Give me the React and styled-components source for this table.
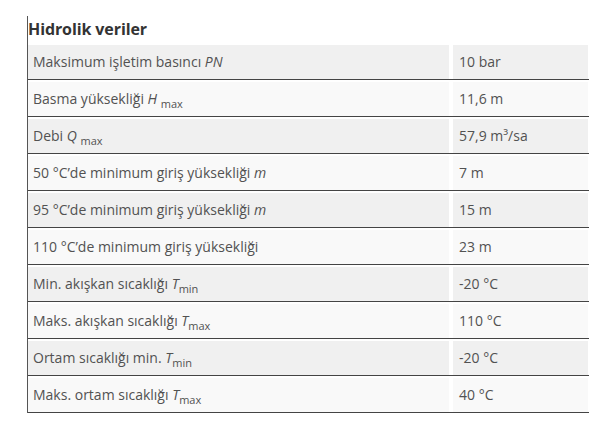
import React from "react";
import styled, { createGlobalStyle } from "styled-components";

const Global = createGlobalStyle`
  html, body { margin: 0; padding: 0; background: #fff; }
  body { font-family: "Open Sans", "Noto Sans", sans-serif; }
`;

const Page = styled.div`
  padding: 16px 0 0 27px;
`;

const Section = styled.section`
  width: 561px;
  border-left: 1px solid #555;
`;

const Title = styled.h2`
  margin: 0;
  font-size: 16px;
  font-weight: 700;
  line-height: 27px;
  color: #333;
  letter-spacing: -0.1px;
`;

const Row = styled.div`
  display: grid;
  grid-template-columns: 421px 135px;
  column-gap: 4px;
  padding-top: 2px;
  border-bottom: 1px solid #444;
`;

const Cell = styled.div`
  height: 34px;
  line-height: 34px;
  padding-left: ${(p) => (p.$value ? "6px" : "5px")};
  background: ${(p) => (p.$odd ? "#f0f0f0" : "#f9f9f9")};
  font-size: 14px;
  color: #525252;
  white-space: nowrap;
`;

const Sym = styled.i`
  font-style: italic;
`;

const Sub = styled.sub`
  font-size: 11px;
  vertical-align: -4px;
  line-height: 0;
`;

const rows = [
  [<>Maksimum işletim basıncı <Sym>PN</Sym></>, "10 bar"],
  [<>Basma yüksekliği <Sym>H</Sym> <Sub>max</Sub></>, "11,6 m"],
  [<>Debi <Sym>Q</Sym> <Sub>max</Sub></>, "57,9 m³/sa"],
  [<>50 °C’de minimum giriş yüksekliği <Sym>m</Sym></>, "7 m"],
  [<>95 °C’de minimum giriş yüksekliği <Sym>m</Sym></>, "15 m"],
  [<>110 °C’de minimum giriş yüksekliği</>, "23 m"],
  [<>Min. akışkan sıcaklığı <Sym>T</Sym><Sub>min</Sub></>, "-20 °C"],
  [<>Maks. akışkan sıcaklığı <Sym>T</Sym><Sub>max</Sub></>, "110 °C"],
  [<>Ortam sıcaklığı min. <Sym>T</Sym><Sub>min</Sub></>, "-20 °C"],
  [<>Maks. ortam sıcaklığı <Sym>T</Sym><Sub>max</Sub></>, "40 °C"],
];

export default function App() {
  return (
    <>
      <Global />
      <Page>
        <Section>
          <Title>Hidrolik veriler</Title>
          {rows.map(([label, value], i) => (
            <Row key={i}>
              <Cell $odd={i % 2 === 0}>{label}</Cell>
              <Cell $odd={i % 2 === 0} $value>{value}</Cell>
            </Row>
          ))}
        </Section>
      </Page>
    </>
  );
}
